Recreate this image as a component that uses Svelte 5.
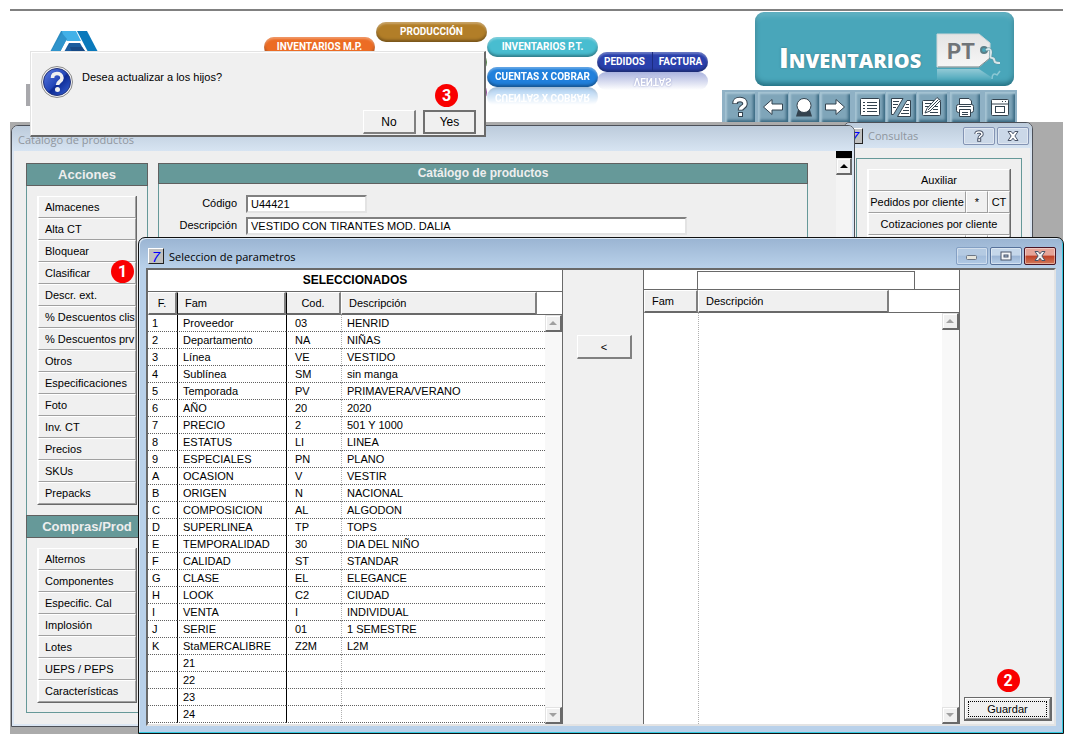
<script lang="ts">
  type Param = { key: string; fam: string; cod: string; desc: string };

  const acciones = [
    'Almacenes',
    'Alta CT',
    'Bloquear',
    'Clasificar',
    'Descr. ext.',
    '% Descuentos clis',
    '% Descuentos prv',
    'Otros',
    'Especificaciones',
    'Foto',
    'Inv. CT',
    'Precios',
    'SKUs',
    'Prepacks'
  ];

  const compras = [
    'Alternos',
    'Componentes',
    'Especific. Cal',
    'Implosión',
    'Lotes',
    'UEPS / PEPS',
    'Características'
  ];

  const params: Param[] = [
    { key: '1', fam: 'Proveedor', cod: '03', desc: 'HENRID' },
    { key: '2', fam: 'Departamento', cod: 'NA', desc: 'NIÑAS' },
    { key: '3', fam: 'Línea', cod: 'VE', desc: 'VESTIDO' },
    { key: '4', fam: 'Sublínea', cod: 'SM', desc: 'sin manga' },
    { key: '5', fam: 'Temporada', cod: 'PV', desc: 'PRIMAVERA/VERANO' },
    { key: '6', fam: 'AÑO', cod: '20', desc: '2020' },
    { key: '7', fam: 'PRECIO', cod: '2', desc: '501 Y 1000' },
    { key: '8', fam: 'ESTATUS', cod: 'LI', desc: 'LINEA' },
    { key: '9', fam: 'ESPECIALES', cod: 'PN', desc: 'PLANO' },
    { key: 'A', fam: 'OCASION', cod: 'V', desc: 'VESTIR' },
    { key: 'B', fam: 'ORIGEN', cod: 'N', desc: 'NACIONAL' },
    { key: 'C', fam: 'COMPOSICION', cod: 'AL', desc: 'ALGODON' },
    { key: 'D', fam: 'SUPERLINEA', cod: 'TP', desc: 'TOPS' },
    { key: 'E', fam: 'TEMPORALIDAD', cod: '30', desc: 'DIA DEL NIÑO' },
    { key: 'F', fam: 'CALIDAD', cod: 'ST', desc: 'STANDAR' },
    { key: 'G', fam: 'CLASE', cod: 'EL', desc: 'ELEGANCE' },
    { key: 'H', fam: 'LOOK', cod: 'C2', desc: 'CIUDAD' },
    { key: 'I', fam: 'VENTA', cod: 'I', desc: 'INDIVIDUAL' },
    { key: 'J', fam: 'SERIE', cod: '01', desc: '1 SEMESTRE' },
    { key: 'K', fam: 'StaMERCALIBRE', cod: 'Z2M', desc: 'L2M' },
    { key: '', fam: '21', cod: '', desc: '' },
    { key: '', fam: '22', cod: '', desc: '' },
    { key: '', fam: '23', cod: '', desc: '' },
    { key: '', fam: '24', cod: '', desc: '' }
  ];

  let codigo = $state('U44421');
  let descripcion = $state('VESTIDO CON TIRANTES MOD. DALIA');
  let filtro = $state('');
</script>

{#snippet scrollbar()}
  <div class="scrollbar">
    <button class="scroll-btn" aria-label="Subir">
      <svg width="8" height="6" viewBox="0 0 8 6"><path d="M4 1L8 5H0Z" fill="#a0a0a0" /></svg>
    </button>
    <button class="scroll-btn" aria-label="Bajar">
      <svg width="8" height="6" viewBox="0 0 8 6"><path d="M0 1H8L4 5Z" fill="#a0a0a0" /></svg>
    </button>
  </div>
{/snippet}

{#snippet closeGlyph(fill: string)}
  <svg width="14" height="12" viewBox="0 0 14 12">
    <path d="M2 1.5H5.2L7 3.8L8.8 1.5H12L8.9 6L12 10.5H8.8L7 8.2L5.2 10.5H2L5.1 6Z" {fill} stroke="#4a5468" stroke-width="1" />
  </svg>
{/snippet}

<div class="screen">
  <header class="header">
    <svg class="logo" width="72" height="75" viewBox="0 0 72 75">
      <rect x="0" y="53" width="12" height="22" fill="#a8a8ac" />
      <path d="M35 0H43L40 9L34 21H24Z" fill="#2b8cc2" />
      <path d="M36 0H50L55 10H41L37 6Z" fill="#42b1e8" />
      <path d="M41 8L34 21H25L36 2Z" fill="#2f94cc" />
      <path d="M51 0H61L72 21H62Z" fill="#0a79bb" />
      <path d="M43 12H54L59 21H38Z" fill="#1b5c9e" />
      <path d="M44 16H56L60 21H46Z" fill="#174a86" />
    </svg>

    <nav class="flow">
      <button class="pill mp">INVENTARIOS M.P.</button>
      <button class="pill prod">PRODUCCIÓN</button>
      <button class="pill green" aria-label="Procesos"></button>
      <button class="pill purple" aria-label="Pagos"></button>
      <button class="pill pt">INVENTARIOS P.T.</button>
      <button class="pill cxc">CUENTAS X COBRAR</button>
      <div class="pill ventas">
        <button>PEDIDOS</button>
        <button>FACTURA</button>
      </div>
      <div class="ventas-shadow"><span>VENTAS</span></div>
    </nav>

    <div class="module">
      <div class="banner">
        <h1>Inventarios</h1>
        <svg width="67" height="48" viewBox="0 0 67 48">
          <defs>
            <linearGradient id="tag" x1="0" y1="0" x2="0" y2="1">
              <stop offset="0" stop-color="#e4e4e4" />
              <stop offset="1" stop-color="#f6f6f6" />
            </linearGradient>
            <linearGradient id="tagShadow" x1="0" y1="0" x2="0" y2="1">
              <stop offset="0" stop-color="#fff" stop-opacity="0.4" />
              <stop offset="1" stop-color="#fff" stop-opacity="0" />
            </linearGradient>
          </defs>
          <path d="M1 36H43L55 44V48H1Z" fill="url(#tagShadow)" />
          <path d="M1 1H43L54 10V25L43 34H1Z" fill="url(#tag)" stroke="#cfd6d8" />
          <path d="M2 34H43L54 25" fill="none" stroke="#7a8c90" />
          <text x="11" y="26" class="tag-text">PT</text>
          <circle cx="48" cy="17" r="3" fill="#49a6ba" stroke="#5b7f88" stroke-width="2" />
          <path d="M50 17C53 15 55 16 55 19S53 25 56 25S58 28 59 29S62 30 64 30" fill="none" stroke="#5b8f9a" stroke-width="3" />
          <path d="M50 17C53 15 55 16 55 19S53 25 56 25S58 28 59 29S62 30 64 30" fill="none" stroke="#d6e6ea" stroke-width="2" />
          <path d="M56 46C56 41 58 40 61 42L64 38" fill="none" stroke="#8cc8d4" stroke-width="1.5" />
        </svg>
      </div>

      <div class="toolbar">
        <button class="tool" aria-label="Ayuda">
          <svg width="22" height="22" viewBox="0 0 22 22">
            <path d="M6 8C6 4.500 8 3.500 11 3.500S16 5 16 8C16 11 11.500 11 11.500 14.500" class="ink" stroke-width="5.500" />
            <path d="M6 7.200C6 4.500 8 3.500 11 3.500S16 5 16 8C16 11 11.500 11 11.500 13.700" class="white" stroke-width="3.500" />
            <rect x="9.500" y="16.500" width="4" height="4" class="fillw" />
          </svg>
        </button>
        <button class="tool gap-s" aria-label="Anterior">
          <svg width="22" height="22" viewBox="0 0 22 22">
            <path d="M1.500 11L10 3.500V8H20.500V14H10V18.500Z" class="fillw" />
          </svg>
        </button>
        <button class="tool" aria-label="Usuario">
          <svg width="22" height="22" viewBox="0 0 22 22">
            <path d="M3 20.500L5 14H17L19 20.500Z" fill="#33424e" />
            <circle cx="11" cy="9.500" r="7" class="fillw" />
          </svg>
        </button>
        <button class="tool" aria-label="Siguiente">
          <svg width="22" height="22" viewBox="0 0 22 22">
            <path d="M20.500 11L12 3.500V8H1.500V14H12V18.500Z" class="fillw" />
          </svg>
        </button>
        <button class="tool gap-l" aria-label="Lista">
          <svg width="22" height="22" viewBox="0 0 22 22">
            <rect x="1.500" y="2.500" width="19" height="17" rx="1" class="fillw" />
            <path d="M4 6.500H6M8 6.500H18M4 9.500H6M8 9.500H18M4 12.500H6M8 12.500H18M4 15.500H6M8 15.500H18" stroke="#33424e" />
          </svg>
        </button>
        <button class="tool" aria-label="Comparar">
          <svg width="22" height="22" viewBox="0 0 22 22">
            <path d="M1.500 2.500H13L3.500 18.500H1.500Z" class="fillw" />
            <path d="M20.500 4.500H17L7.500 20.500H20.500Z" class="fillw" />
            <path d="M3 5.500H9M3 8.500H8M3 11.500H6M16 8.500H19M15 11.500H19M13 14.500H19M11 17.500H19" stroke="#33424e" />
          </svg>
        </button>
        <button class="tool" aria-label="Editar">
          <svg width="22" height="22" viewBox="0 0 22 22">
            <rect x="1.500" y="4.500" width="18" height="15" rx="1" class="fillw" />
            <path d="M4 7.500H11M4 10.500H8M14 10.500H17M12 13.500H17M9 16.500H17" stroke="#33424e" />
            <path d="M4 17L6 12.500L16 1.500L19.500 4.500L9 15Z" class="fillw" />
            <path d="M7 14L17.500 3.500" stroke="#33424e" />
          </svg>
        </button>
        <button class="tool gap-s" aria-label="Imprimir">
          <svg width="22" height="22" viewBox="0 0 22 22">
            <path d="M5.500 2.500H15L17.500 5V9H5.500Z" class="fillw" />
            <rect x="2.500" y="8.500" width="17" height="8" rx="2" class="fillw" />
            <path d="M5.500 13.500H16.500V20.500H5.500Z" class="fillw" />
            <path d="M5 10.500H17M8 16.500H14M8 18.500H14" stroke="#33424e" />
          </svg>
        </button>
        <button class="tool gap-l" aria-label="Ventana">
          <svg width="22" height="22" viewBox="0 0 22 22">
            <rect x="2.500" y="3.500" width="17" height="16" rx="1" class="fillw" />
            <path d="M3 8H19M13 5.500H14M16 5.500H17" stroke="#33424e" />
            <rect x="6.500" y="10.500" width="9" height="6" class="fillw" />
          </svg>
        </button>
      </div>
    </div>
  </header>

  <main class="desktop">
    <section class="win inactive consultas">
      <div class="titlebar">
        <span class="app-icon">7</span>
        <span class="title">Consultas</span>
        <button class="cap pale" aria-label="Ayuda">
          <svg width="10" height="12" viewBox="0 0 10 12">
            <path d="M2 4C2 2 3.500 2 5 2S8 2.500 8 4.200S5.200 6 5.200 8" fill="none" stroke="#4a5468" stroke-width="3.400" />
            <path d="M2 4C2 2 3.500 2 5 2S8 2.500 8 4.200S5.200 6 5.200 8" fill="none" stroke="#fff" stroke-width="1.500" />
            <rect x="3.700" y="8.700" width="3" height="2.600" fill="#fff" stroke="#4a5468" />
          </svg>
        </button>
        <button class="cap pale" aria-label="Cerrar">{@render closeGlyph('#fff')}</button>
      </div>
      <div class="consultas-body">
        <div class="menu centered">
          <div class="menu-row"><button class="item">Auxiliar</button></div>
          <div class="menu-row">
            <button class="item">Pedidos por cliente</button>
            <button class="item short">*</button>
            <button class="item short">CT</button>
          </div>
          <div class="menu-row"><button class="item">Cotizaciones por cliente</button></div>
          <div class="menu-row">
            <button class="item" aria-label="Detalle"></button>
            <button class="item short" aria-label="Todos"></button>
            <button class="item short" aria-label="Total"></button>
          </div>
        </div>
      </div>
    </section>

    <section class="win inactive catalogo">
      <div class="titlebar"><span class="title">Catálogo de productos</span></div>
      <div class="catalogo-body">
        <aside class="panel side">
          <h2>Acciones</h2>
          <div class="menu">
            {#each acciones as label}
              <button class="item">{label}</button>
            {/each}
          </div>
          <h2>Compras/Prod</h2>
          <div class="menu">
            {#each compras as label}
              <button class="item">{label}</button>
            {/each}
          </div>
        </aside>
        <div class="panel product">
          <h2>Catálogo de productos</h2>
          <div class="fields">
            <label for="codigo">Código</label>
            <input id="codigo" class="codigo" bind:value={codigo} />
            <label for="descripcion">Descripción</label>
            <input id="descripcion" class="descripcion" bind:value={descripcion} />
          </div>
        </div>
        <div class="page-scroll">
          <button class="scroll-btn" aria-label="Subir">
            <svg width="8" height="6" viewBox="0 0 8 6"><path d="M4 1L8 5H0Z" fill="#000" /></svg>
          </button>
        </div>
      </div>
      <span class="badge one">1</span>
    </section>

    <section class="win seleccion">
      <div class="titlebar">
        <span class="app-icon">7</span>
        <span class="title">Seleccion de parametros</span>
        <button class="cap dim" aria-label="Minimizar">
          <svg width="12" height="12" viewBox="0 0 12 12">
            <rect x="0.500" y="5.500" width="10" height="4" rx="1" fill="#e4e4dc" stroke="#6c7684" />
          </svg>
        </button>
        <button class="cap" aria-label="Maximizar">
          <svg width="12" height="10" viewBox="0 0 12 10">
            <rect x="1" y="1" width="10" height="8" fill="#f4f6f8" stroke="#4a5468" />
            <rect x="4" y="4" width="4" height="2" fill="#a9bfdc" stroke="#4a5468" />
          </svg>
        </button>
        <button class="cap close" aria-label="Cerrar">{@render closeGlyph('#f0f0f0')}</button>
      </div>

      <div class="client">
        <div class="grid-box">
          <table class="selected">
            <caption>SELECCIONADOS</caption>
            <colgroup>
              <col class="c-key" />
              <col class="c-fam" />
              <col class="c-cod" />
              <col />
              <col class="c-rest" />
              <col class="c-scroll" />
            </colgroup>
            <thead>
              <tr>
                <th class="mid">F.</th>
                <th class="line">Fam</th>
                <th class="line mid">Cod.</th>
                <th>Descripción</th>
                <th class="blank" colspan="2"></th>
              </tr>
            </thead>
            <tbody>
              {#each params as p}
                <tr>
                  <td>{p.key}</td>
                  <td class="fam">{p.fam}</td>
                  <td class="cod">{p.cod}</td>
                  <td class="desc" colspan="2">{p.desc}</td>
                </tr>
              {/each}
            </tbody>
          </table>
          {@render scrollbar()}
        </div>

        <div class="mover">
          <button class="raised move">&lt;</button>
        </div>

        <div class="grid-box available">
          <div class="filter">
            <input aria-label="Buscar descripción" bind:value={filtro} />
          </div>
          <table>
            <colgroup>
              <col class="c-fam2" />
              <col class="c-desc2" />
              <col />
            </colgroup>
            <thead>
              <tr>
                <th>Fam</th>
                <th>Descripción</th>
                <th class="blank"></th>
              </tr>
            </thead>
            <tbody>
              <tr>
                <td></td>
                <td class="desc" colspan="2"></td>
              </tr>
            </tbody>
          </table>
          {@render scrollbar()}
        </div>

        <div class="actions">
          <span class="badge">2</span>
          <button class="raised save"><span>Guardar</span></button>
        </div>
      </div>
    </section>
  </main>

  <div class="dialog" role="dialog" aria-label="Confirmar">
    <div class="message">
      <svg width="32" height="32" viewBox="0 0 32 32">
        <defs>
          <linearGradient id="ask" x1="0" y1="0" x2="1" y2="1">
            <stop offset="0" stop-color="#5c7be0" />
            <stop offset="0.5" stop-color="#2346b8" />
            <stop offset="0.55" stop-color="#0d2a94" />
            <stop offset="1" stop-color="#3a66d8" />
          </linearGradient>
        </defs>
        <circle cx="16" cy="16" r="15.500" fill="#f2f2f2" stroke="#8a8a8a" />
        <circle cx="16" cy="16" r="13.500" fill="url(#ask)" stroke="#24347c" />
        <path d="M11.500 12C11.500 8.500 13.500 7.500 16 7.500S21 8.800 21 12C21 15.500 16.500 15.500 16.500 19" fill="none" stroke="#f0f0f0" stroke-width="3.600" />
        <circle cx="16.500" cy="23.500" r="2.500" fill="#f0f0f0" />
      </svg>
      <p>Desea actualizar a los hijos?</p>
    </div>
    <div class="answers">
      <button class="raised">No</button>
      <button class="raised default">Yes</button>
    </div>
    <span class="badge three">3</span>
  </div>
</div>

<style>
  :global(body) {
    margin: 0;
    background: #fff;
  }

  .screen {
    position: relative;
    padding: 9px 9px 10px 10px;
    font: 11px/16px 'Liberation Sans', Arial, sans-serif;
    color: #000;
  }

  .screen * {
    box-sizing: border-box;
  }

  button,
  input {
    font: inherit;
    color: inherit;
    margin: 0;
    padding: 0;
    border-radius: 0;
  }

  h1,
  h2,
  p {
    margin: 0;
  }

  svg {
    display: block;
    flex: none;
  }

  /* Header */
  .header {
    display: flex;
    justify-content: space-between;
    height: 113px;
    margin-right: 1px;
    border-top: 2px solid #808080;
  }

  .logo {
    margin: 20px 0 0 16px;
  }

  .flow {
    position: relative;
    width: 444px;
    margin: 0 auto 0 166px;
  }

  .pill {
    position: absolute;
    width: 111px;
    height: 20px;
    border: 0;
    border-radius: 10px;
    box-shadow: inset 0 2px 2px rgba(255, 255, 255, 0.3), inset 0 -2px 3px rgba(0, 0, 0, 0.35);
    font: bold 10px/20px Roboto, 'Liberation Sans', sans-serif;
    color: #fff;
    text-align: center;
    white-space: nowrap;
  }

  .mp {
    left: 0;
    top: 26px;
    background: #ec6c24;
  }

  .prod {
    left: 112px;
    top: 11px;
    background: #b27e28;
  }

  .green {
    left: 112px;
    top: 41px;
    background: #4c8c3c;
  }

  .purple {
    left: 112px;
    top: 71px;
    background: #a040a8;
  }

  .pt {
    left: 223px;
    top: 26px;
    background: #48bdd0;
  }

  .cxc {
    left: 223px;
    top: 56px;
    background: #2180dc;
    -webkit-box-reflect: below 0 linear-gradient(transparent 10%, rgba(0, 0, 0, 0.4));
  }

  .ventas {
    left: 333px;
    top: 41px;
    display: flex;
    overflow: hidden;
    background: #2a40ac;
  }

  .ventas button {
    flex: 1;
    border: 0;
    background: none;
  }

  .ventas button + button {
    border-left: 1px solid #1c2c80;
  }

  .ventas-shadow {
    position: absolute;
    left: 333px;
    top: 61px;
    width: 111px;
    height: 18px;
    border-radius: 10px;
    background: linear-gradient(rgba(42, 64, 172, 0.4), rgba(42, 64, 172, 0));
    font: bold 10px/18px Roboto, 'Liberation Sans', sans-serif;
    color: #fff;
    text-align: center;
  }

  .ventas-shadow span {
    display: block;
    transform: scaleY(-1);
    text-shadow: 0 0 2px #8890c8;
  }

  .module {
    display: flex;
    flex-direction: column;
    align-items: flex-end;
    justify-content: space-between;
    margin-right: 46px;
    padding-top: 1px;
  }

  .banner {
    display: flex;
    align-items: center;
    justify-content: space-between;
    width: 259px;
    height: 74px;
    margin-right: 3px;
    padding: 16px 11px 0 24px;
    border-radius: 9px;
    background: #49a6ba;
    box-shadow: inset 0 4px 5px rgba(255, 255, 255, 0.15), inset 0 -3px 5px rgba(0, 60, 75, 0.5);
  }

  .banner h1 {
    font: 800 28px/36px 'Open Sans', sans-serif;
    font-variant: small-caps;
    color: #fff;
    text-shadow: 0 0 2px #3a6f7c;
  }

  .tag-text {
    font: bold 22px Roboto, 'Liberation Sans', sans-serif;
    fill: #707478;
  }

  .toolbar {
    display: flex;
    padding: 2px 1px 0 3px;
    background: #8fb1c5;
  }

  .tool {
    display: grid;
    place-items: center;
    width: 30px;
    height: 30px;
    margin-right: 1px;
    border: 0;
    background: #7fa5b9;
    box-shadow: inset 2px 2px 2px #a6c4d3, inset -2px -2px 3px #3b6a82;
  }

  .gap-s {
    margin-left: 2px;
  }

  .gap-l {
    margin-left: 4px;
  }

  .ink {
    fill: none;
    stroke: #33424e;
  }

  .white {
    fill: none;
    stroke: #fff;
  }

  .fillw {
    fill: #fff;
    stroke: #33424e;
  }

  /* Windows */
  .desktop {
    position: relative;
    padding: 115px 0 0 128px;
    background: linear-gradient(#ababab, #ababab) no-repeat 0 0 / calc(100% - 1px) 100%;
  }

  .win {
    border: 1px solid #2c3038;
    border-radius: 7px 7px 0 0;
  }

  .titlebar {
    display: flex;
    align-items: center;
    gap: 2px;
    font: 11px/16px 'Open Sans', 'Noto Sans', sans-serif;
  }

  .title {
    margin: 0 auto 0 3px;
    white-space: nowrap;
  }

  .app-icon {
    width: 16px;
    height: 16px;
    border: 1px solid;
    border-color: #fff #222 #222 #fff;
    background: #c0c0c0;
    font: italic 15px/15px 'Liberation Sans', sans-serif;
    color: #00f;
    text-align: center;
  }

  .inactive {
    border-color: #4c5058;
    background: #efefef;
    box-shadow: inset 2px 0 #dbe6f3, inset -2px -2px #dbe6f3;
  }

  .inactive .titlebar {
    height: 25px;
    padding: 0 3px 0 3px;
    border-radius: 6px 6px 0 0;
    background: linear-gradient(#bccbdb, #d7e4f2);
    color: #8f969e;
  }

  .catalogo .title {
    padding-top: 3px;
  }

  .cap {
    display: grid;
    place-items: center;
    width: 32px;
    height: 18px;
    border: 1px solid #56719a;
    border-radius: 2px;
    background: linear-gradient(#c5d7ea 45%, #9ab4d4 50%, #b8cfe8);
    box-shadow: inset 0 0 0 1px rgba(255, 255, 255, 0.4);
  }

  .cap.pale {
    border-color: #8494b4;
    background: #cbd8e8;
  }

  .cap.dim {
    border-color: #84a0c4;
    background: linear-gradient(#b4cae2 45%, #a3bddb 50%, #b0c9e4);
  }

  .cap.close {
    border-color: #4a1424;
    background: linear-gradient(#e6a498 45%, #bf4026 50%, #d27858);
  }

  .consultas {
    position: absolute;
    top: 0;
    right: 31px;
    width: 190px;
    height: 200px;
  }

  .consultas-body {
    height: 160px;
    margin: 10px 10px 0 12px;
    padding: 10px;
    border: 1px solid #669999;
  }

  .menu {
    display: flex;
    flex-direction: column;
    border: solid;
    border-width: 0 1px 1px;
    border-color: #fff #696969 #696969 #fff;
  }

  .menu-row {
    display: flex;
  }

  .item {
    flex: 1;
    height: 22px;
    min-height: 22px;
    padding: 0 0 0 6px;
    border: 1px solid;
    border-color: #fff #a0a0a0 #a0a0a0 #fff;
    background: #f0f0f0;
    text-align: left;
    white-space: nowrap;
  }

  .centered .item {
    padding: 0;
    text-align: center;
  }

  .centered .short {
    flex: 0 0 22px;
  }

  .catalogo {
    position: absolute;
    top: 3px;
    right: 209px;
    bottom: 7px;
    left: 1px;
  }

  .catalogo-body {
    display: flex;
    height: calc(100% - 25px);
    padding: 0 2px 0 14px;
  }

  .panel {
    margin: 12px 0 13px;
    border: 1px solid #669999;
  }

  .panel h2 {
    margin: -1px -1px 0;
    border: 1px solid #606060;
    background: #669999;
    font: bold 13px/21px 'Liberation Sans', Arial, sans-serif;
    color: #eee;
    text-align: center;
  }

  .side {
    width: 122px;
    margin-right: 10px;
  }

  .side .menu {
    margin: 10px 10px 11px;
  }

  .product {
    flex: 1;
    margin-right: 28px;
  }

  .product h2 {
    font-size: 12px;
    line-height: 19px;
  }

  .fields {
    display: grid;
    grid-template-columns: 78px 1fr;
    gap: 4px 9px;
    padding: 11px 120px 0 0;
  }

  .fields label {
    line-height: 16px;
    text-align: right;
  }

  .fields input {
    width: 100%;
    height: 18px;
    padding: 0 3px;
    border: 2px solid;
    border-color: #808080 #e3e3e3 #e3e3e3 #808080;
    background: #fff;
  }

  .fields .codigo {
    width: 121px;
  }

  .page-scroll {
    width: 16px;
    border-top: 7px solid #000;
    background: #f4f4f4;
  }

  /* Parameter selection */
  .seleccion {
    position: relative;
    padding: 0 7px 7px;
    border-color: #111;
    background: linear-gradient(#9ab4d2, #b9d1ea 30px);
    box-shadow: inset -1px -1px #35c8e0, inset 1px 1px #dce9f6;
  }

  .seleccion .titlebar {
    height: 30px;
    padding: 0 0 0 2px;
  }

  .seleccion .app-icon {
    margin-top: 6px;
  }

  .seleccion .title {
    margin-top: 7px;
  }

  .seleccion .cap {
    margin-top: 6px;
  }

  .client {
    display: grid;
    grid-template-columns: minmax(0, 1fr) 80px 317px 94px;
    border: 2px solid;
    border-color: #696969 #e3e3e3 #e3e3e3 #696969;
    background: #f0f0f0;
  }

  .grid-box {
    position: relative;
    border-right: 1px solid #696969;
    background: #fff;
  }

  table {
    width: 100%;
    border-spacing: 0;
    table-layout: fixed;
  }

  .selected {
    margin-bottom: 1px;
  }

  caption {
    height: 22px;
    border-bottom: 1px solid #696969;
    font-weight: bold;
    font-size: 12px;
    line-height: 21px;
  }

  th {
    height: 23px;
    padding: 0 0 0 7px;
    border: solid;
    border-width: 1px 2px 2px 1px;
    border-color: #fff #808080 #696969 #fff;
    background: #f0f0f0;
    font-weight: normal;
    text-align: left;
  }

  th.mid {
    padding: 0;
    text-align: center;
  }

  th.line {
    border-left-color: #000;
  }

  th.blank {
    border-width: 0 0 1px;
    border-color: #696969;
    background: #fff;
  }

  td {
    height: 17px;
    padding: 0 0 0 4px;
    border-bottom: 1px dotted #606060;
    line-height: 16px;
    white-space: nowrap;
  }

  td.fam {
    padding-left: 5px;
    border-left: 1px solid #000;
  }

  td.cod {
    padding-left: 8px;
    border-left: 1px solid #000;
  }

  td.desc {
    padding-left: 5px;
    border-left: 1px dotted #b0b0b0;
  }

  .c-key {
    width: 29px;
  }

  .c-fam {
    width: 109px;
  }

  .c-cod {
    width: 55px;
  }

  .c-rest {
    width: 8px;
  }

  .c-scroll {
    width: 17px;
  }

  .scrollbar {
    position: absolute;
    top: 45px;
    right: 0;
    bottom: 0;
    display: flex;
    flex-direction: column;
    justify-content: space-between;
    width: 17px;
    background: #f8f8f8;
  }

  .scroll-btn {
    display: grid;
    place-items: center;
    width: 100%;
    height: 17px;
    border: solid;
    border-width: 1px 2px 2px 1px;
    border-color: #e3e3e3 #696969 #696969 #e3e3e3;
    background: #f0f0f0;
    box-shadow: inset 1px 1px #fff;
  }

  .mover {
    padding: 65px 11px 0 14px;
  }

  .raised {
    height: 24px;
    border: solid;
    border-width: 1px 2px 2px 1px;
    border-color: #fff #808080 #808080 #fff;
    background: #f0f0f0;
    text-align: center;
  }

  .move {
    width: 100%;
  }

  .available {
    display: flex;
    flex-direction: column;
    border-left: 1px solid #696969;
  }

  .filter {
    height: 20px;
    padding: 1px 44px 0 53px;
    border-bottom: 1px solid #696969;
  }

  .filter input {
    display: block;
    width: 100%;
    height: 18px;
    padding: 0 4px;
    border: 1px solid #696969;
    border-bottom: 0;
    background: #fff;
  }

  .available table {
    flex: 1;
  }

  .available thead tr {
    height: 23px;
  }

  .available td {
    border-bottom: 0;
  }

  .available .scrollbar {
    top: 43px;
  }

  .c-fam2 {
    width: 54px;
  }

  .c-desc2 {
    width: 191px;
  }

  .actions {
    display: flex;
    flex-direction: column;
    align-items: center;
    justify-content: flex-end;
    gap: 5px;
    padding: 0 2px 3px 4px;
  }

  .save {
    width: 100%;
    padding: 2px;
    border: 1px solid #696969;
    border-width: 1px 2px 2px 1px;
    box-shadow: inset 1px 1px #fff, inset -1px -1px #a0a0a0;
  }

  .save span {
    display: block;
    margin: 0 1px;
    border: 1px dotted #000;
    line-height: 14px;
  }

  .badge {
    width: 23px;
    height: 23px;
    border-radius: 50%;
    background: #f90000;
    font: bold 16px/23px Roboto, 'Liberation Sans', sans-serif;
    color: #fff;
    text-align: center;
  }

  .badge.one {
    position: absolute;
    top: 134px;
    left: 99px;
  }

  /* Confirmation dialog */
  .dialog {
    position: absolute;
    top: 51px;
    left: 30px;
    width: 456px;
    padding: 14px 8px 1px;
    border: solid;
    border-width: 1px 2px 2px 1px;
    border-color: #e3e3e3 #696969 #696969 #e3e3e3;
    background: #f0f0f0;
    box-shadow: inset 1px 1px #fff;
  }

  .message {
    display: flex;
    gap: 9px;
    padding-left: 2px;
  }

  .message p {
    padding-top: 3px;
  }

  .answers {
    display: flex;
    justify-content: flex-end;
    gap: 7px;
    padding-top: 12px;
  }

  .answers button {
    width: 53px;
    font-size: 12px;
  }

  .answers .default {
    border: 2px solid #707070;
  }

  .badge.three {
    position: absolute;
    top: 32px;
    right: 26px;
  }
</style>
